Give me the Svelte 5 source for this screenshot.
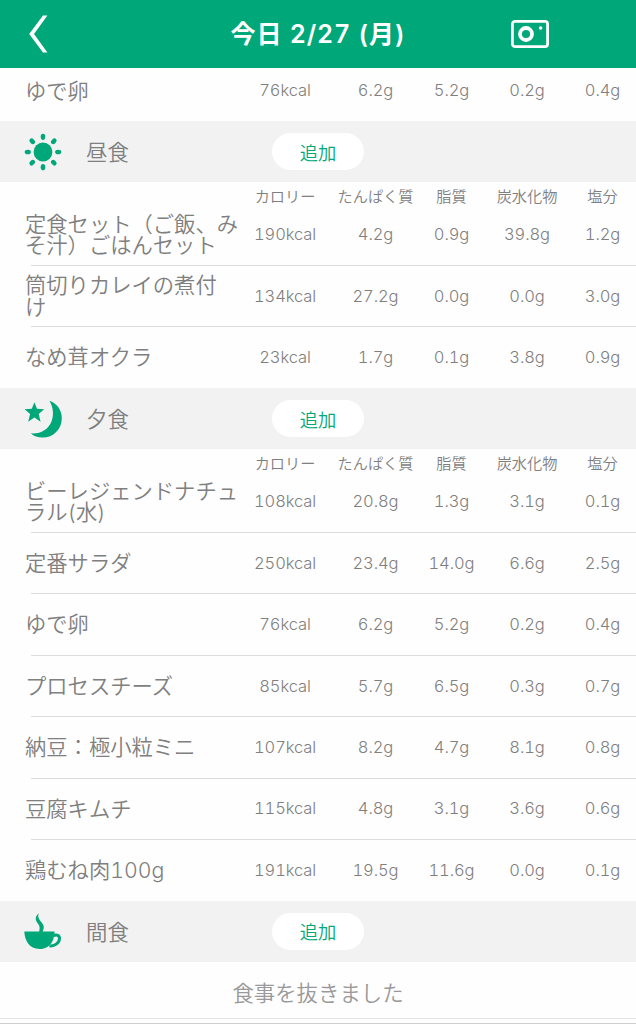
<script lang="ts">
	type Item = { name: string; values: string[] };
	type Meal = { icon: string; title: string; items: Item[] };

	const columns = ['カロリー', 'たんぱく質', '脂質', '炭水化物', '塩分'];

	const breakfast: Item[] = [
		{ name: 'ゆで卵', values: ['76kcal', '6.2g', '5.2g', '0.2g', '0.4g'] }
	];

	const meals: Meal[] = [
		{
			icon: 'sun',
			title: '昼食',
			items: [
				{ name: '定食セット（ご飯、み\nそ汁）ごはんセット', values: ['190kcal', '4.2g', '0.9g', '39.8g', '1.2g'] },
				{ name: '筒切りカレイの煮付\nけ', values: ['134kcal', '27.2g', '0.0g', '0.0g', '3.0g'] },
				{ name: 'なめ茸オクラ', values: ['23kcal', '1.7g', '0.1g', '3.8g', '0.9g'] }
			]
		},
		{
			icon: 'moon',
			title: '夕食',
			items: [
				{ name: 'ビーレジェンドナチュ\nラル(水)', values: ['108kcal', '20.8g', '1.3g', '3.1g', '0.1g'] },
				{ name: '定番サラダ', values: ['250kcal', '23.4g', '14.0g', '6.6g', '2.5g'] },
				{ name: 'ゆで卵', values: ['76kcal', '6.2g', '5.2g', '0.2g', '0.4g'] },
				{ name: 'プロセスチーズ', values: ['85kcal', '5.7g', '6.5g', '0.3g', '0.7g'] },
				{ name: '納豆：極小粒ミニ', values: ['107kcal', '8.2g', '4.7g', '8.1g', '0.8g'] },
				{ name: '豆腐キムチ', values: ['115kcal', '4.8g', '3.1g', '3.6g', '0.6g'] },
				{ name: '鶏むね肉100g', values: ['191kcal', '19.5g', '11.6g', '0.0g', '0.1g'] }
			]
		},
		{ icon: 'cup', title: '間食', items: [] }
	];

	const rays = [0, 45, 90, 135, 180, 225, 270, 315];
</script>

{#snippet row(item: Item)}
	<div class="row">
		<div class="name">{item.name}</div>
		{#each item.values as value}
			<div class="value">{value}</div>
		{/each}
	</div>
{/snippet}

<div class="app">
	<header>
		<button class="back" aria-label="戻る">
			<svg width="20" height="38" viewBox="0 0 20 38">
				<path d="M15 0.5 H19.4 L6 19 L19.4 37.5 H15 L1.2 19 Z" />
			</svg>
		</button>
		<h1>今日 2/27 (月)</h1>
		<button class="camera" aria-label="カメラ">
			<svg width="38" height="28" viewBox="0 0 38 28">
				<rect x="1.4" y="1.4" width="35.2" height="25.2" rx="2.6" />
				<circle class="lens" cx="15" cy="14" r="6" />
				<circle class="dot" cx="29.6" cy="8" r="1.8" />
			</svg>
		</button>
	</header>

	<div class="list breakfast">
		{#each breakfast as item}
			{@render row(item)}
		{/each}
	</div>

	{#each meals as meal}
		<div class="meal">
			<svg class="icon" width="38" height="38" viewBox="0 0 38 38">
				{#if meal.icon === 'sun'}
					<circle cx="19" cy="19" r="9.4" />
					{#each rays as angle}
						<ellipse cx="19" cy="3.8" rx="2.3" ry="3.1" transform="rotate({angle} 19 19)" />
					{/each}
				{:else if meal.icon === 'moon'}
					<path d="M10.4 2.3 L13 8.8 L20.2 9.3 L14.7 13.9 L16.6 21.7 L10.4 17.5 L4.2 21.7 L6.1 13.9 L0.6 9.3 L7.8 8.8 Z" />
					<path d="M25.5 0.8 C33.7 3.8 37.8 10.7 37.8 18.2 C37.8 29.2 29.2 37.6 18.7 37.6 C13.7 37.6 9.7 36.2 6.9 33.3 C16.2 34.1 24.2 29.7 27.5 21.4 C30.2 14.5 29.1 7.4 25.5 0.8 Z" />
				{:else}
					<path d="M14.6 1.2 C9.8 5.8 12 9.2 14.6 12.6 C16.2 14.9 15.6 17.4 15.1 19.9 L18.5 19.9 C20.5 15.6 20.3 13.4 17.2 9.9 C14.5 6.9 13.6 4.8 14.6 1.2 Z" />
					<path d="M0.3 19.5 H30.6 C30.4 27.2 27 37 15.6 37 C4.8 37 0.8 28.2 0.3 19.5 Z" />
					<path class="handle" d="M29.6 23.6 C32.8 22 35.7 23.6 35.5 26.8 C35.2 30.9 30.5 34.6 25.5 33.8" />
				{/if}
			</svg>
			<h2>{meal.title}</h2>
			<button class="add">追加</button>
		</div>
		{#if meal.items.length}
			<div class="row head">
				<div></div>
				{#each columns as column}
					<div>{column}</div>
				{/each}
			</div>
			<div class="list">
				{#each meal.items as item}
					{@render row(item)}
				{/each}
			</div>
		{:else}
			<div class="skipped">食事を抜きました</div>
		{/if}
	{/each}
	<div class="end"></div>
</div>

<style>
	:global(body) {
		background: #fefefe;
	}

	.app {
		height: 1024px;
		overflow: hidden;
		color: #7f7f7f;
		font-family: 'Noto Sans CJK JP', sans-serif;
		font-weight: 350;
	}

	button {
		padding: 0;
		border: 0;
		background: none;
		font: inherit;
	}

	header {
		display: grid;
		grid-template-columns: 126px 384px 126px;
		height: 67.703125px;
		align-items: center;
		background: #00a879;
	}

	header svg {
		display: block;
		fill: #fff;
	}

	.back {
		padding-left: 28px;
	}

	.camera {
		padding-left: 1px;
	}

	.camera rect,
	.camera .lens {
		fill: none;
		stroke: #fff;
		stroke-width: 2.8;
	}

	.camera .lens {
		stroke-width: 3.8;
	}

	h1 {
		margin: 0;
		padding-top: 1px;
		color: #fff;
		font-family: Inter, 'Noto Sans CJK JP', sans-serif;
		font-size: 25px;
		font-weight: 600;
		line-height: 34px;
		text-align: center;
		letter-spacing: 0.8px;
		font-variant-numeric: tabular-nums;
	}

	.row {
		display: grid;
		grid-template-columns: 215px 90px 91px 61px 90px 61px;
		box-sizing: border-box;
		height: 61.40625px;
		padding-left: 25px;
		align-items: center;
		text-align: center;
	}

	/* Separators start a little to the right of the names */
	.list .row + .row {
		background: linear-gradient(#dcdcdc, #dcdcdc) 31px 0 / 100% 1px no-repeat;
	}

	.breakfast .row {
		height: 53.125px;
		padding-bottom: 8px;
	}

	.name {
		padding-top: 2px;
		font-family: Inter, 'Noto Sans CJK JP', sans-serif;
		font-size: 21.3px;
		font-variant-numeric: tabular-nums;
		line-height: 21.4px;
		text-align: left;
		white-space: pre;
	}

	.value {
		font-family: Inter, sans-serif;
		font-size: 16.5px;
		font-variant-numeric: tabular-nums;
		font-weight: 350;
		line-height: 20px;
		letter-spacing: -0.1px;
	}

	.row.head {
		height: 21.40625px;
		font-size: 15.2px;
		line-height: 20px;
		white-space: nowrap;
	}

	.head div {
		padding-top: 5px;
		margin-top: -2px;
		margin-bottom: 2px;
	}

	.meal {
		display: grid;
		grid-template-columns: 62px 186px 92px;
		height: 61.40625px;
		padding-left: 24px;
		align-items: center;
		background: #f2f2f2;
	}

	.icon {
		fill: #00a879;
	}

	.handle {
		fill: none;
		stroke: #00a879;
		stroke-width: 3;
	}

	h2 {
		margin: 0;
		padding-bottom: 1px;
		font-size: 21.4px;
		font-weight: 350;
		line-height: 30px;
	}

	.add {
		height: 36.6px;
		border-radius: 19px;
		background: #fff;
		color: #00a879;
		font-size: 18.3px;
	}

	.skipped {
		height: 56px;
		border-bottom: 1px solid #e4e4e4;
		color: #999;
		font-size: 21.4px;
		line-height: 60px;
		text-align: center;
	}

	.end {
		height: 4px;
		border-bottom: 1px solid #d0d0d0;
	}
</style>
